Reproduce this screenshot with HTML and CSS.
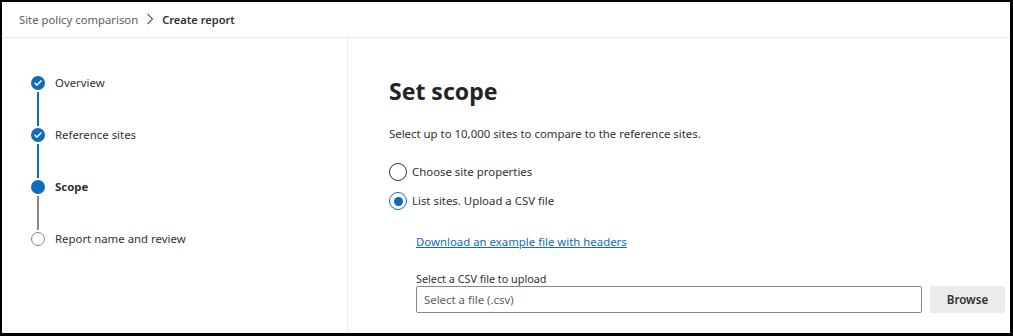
FILE: index.html
```html
<!DOCTYPE html>
<html>
<head>
  <meta charset="UTF-8">
  <title>Create report – Site policy comparison</title>
  <meta name="viewport" content="width=device-width, initial-scale=1.0">
  <link rel="stylesheet" href="styles.css">
</head>
<body>
  <div class="frame">
    <header class="topbar">
      <span class="crumb">Site policy comparison</span>
      <svg class="chev" width="8" height="12" viewBox="0 0 8 12"><path d="M1.5 1 L6.5 6 L1.5 11" fill="none" stroke="#605e5c" stroke-width="1.1"/></svg>
      <span class="crumb current">Create report</span>
    </header>

    <div class="main">
      <nav class="steps">
        <ol>
          <li class="step done">
            <div class="rail">
              <span class="dot"><svg width="14" height="14" viewBox="0 0 14 14"><path d="M4 7.2 L6 9.1 L10 4.9" fill="none" stroke="#fff" stroke-width="1.5" stroke-linecap="round" stroke-linejoin="round"/></svg></span>
              <span class="line"></span>
            </div>
            <span class="label">Overview</span>
          </li>
          <li class="step done">
            <div class="rail">
              <span class="dot"><svg width="14" height="14" viewBox="0 0 14 14"><path d="M4 7.2 L6 9.1 L10 4.9" fill="none" stroke="#fff" stroke-width="1.5" stroke-linecap="round" stroke-linejoin="round"/></svg></span>
              <span class="line"></span>
            </div>
            <span class="label">Reference sites</span>
          </li>
          <li class="step active">
            <div class="rail">
              <span class="dot"></span>
              <span class="line"></span>
            </div>
            <span class="label">Scope</span>
          </li>
          <li class="step todo">
            <div class="rail">
              <span class="dot"></span>
            </div>
            <span class="label">Report name and review</span>
          </li>
        </ol>
      </nav>

      <section class="content">
        <h1>Set scope</h1>
        <p class="intro">Select up to 10,000 sites to compare to the reference sites.</p>

        <div class="choices">
          <label class="choice">
            <span class="radio"></span>
            <span>Choose site properties</span>
          </label>
          <label class="choice">
            <span class="radio checked"></span>
            <span>List sites. Upload a CSV file</span>
          </label>
        </div>

        <div class="upload">
          <a href="#" class="dl-link">Download an example file with headers</a>
          <div class="field-label">Select a CSV file to upload</div>
          <div class="file-row">
            <div class="file-input">Select a file (.csv)</div>
            <button class="browse">Browse</button>
          </div>
        </div>
      </section>
    </div>
  </div>
</body>
</html>
```

FILE: styles.css
```css
* {
  box-sizing: border-box;
}
body {
  margin: 0;
  background: #fff;
  color: #323130;
  font-family: 'Noto Sans', 'Open Sans', sans-serif;
  font-size: 11.4px;
}
.frame {
  width: 1013px;
  height: 336px;
  border-style: solid;
  border-color: #000;
  border-width: 2px 3px 3px 2px;
  overflow: hidden;
  display: flex;
  flex-direction: column;
}
.topbar {
  height: 36px;
  flex: none;
  display: flex;
  align-items: center;
  gap: 8px;
  padding: 0 0 1px 17px;
  border-bottom: 1px solid #edebe9;
}
.crumb {
  color: #605e5c;
  font-size: 11.3px;
}
.crumb.current {
  color: #323130;
  font-weight: 600;
  font-size: 11.1px;
}
.chev {
  display: block;
}
.main {
  flex: 1;
  display: flex;
  min-height: 0;
}
.steps {
  width: 346px;
  flex: none;
  border-right: 1px solid #edebe9;
  padding: 38px 0 0 29px;
}
.steps ol {
  list-style: none;
  margin: 0;
  padding: 0;
}
.step {
  display: flex;
  align-items: flex-start;
  gap: 10px;
}
.rail {
  width: 14px;
  display: flex;
  flex-direction: column;
  align-items: center;
}
.dot {
  width: 14px;
  height: 14px;
  border-radius: 50%;
  display: block;
}
.dot svg {
  display: block;
}
.line {
  width: 2px;
  height: 34px;
  margin: 2px 0;
  background: #0f6cbd;
}
.step.done .dot, .step.active .dot {
  background: #0f6cbd;
}
.step.active .line {
  background: #8a8886;
}
.step.todo .dot {
  border: 1.5px solid #8a8886;
  background: #fff;
}
.label {
  line-height: 14px;
  color: #323130;
}
.step.active .label {
  font-weight: 700;
}
.content {
  flex: 1;
  padding: 37px 5px 0 41px;
}
h1 {
  margin: 0;
  font-size: 23px;
  font-weight: 700;
  line-height: 32px;
  color: #242424;
}
.intro {
  margin: 18px 0 0;
  line-height: 18px;
}
.choices {
  margin-top: 20px;
  display: flex;
  flex-direction: column;
  gap: 11px;
}
.choice {
  display: flex;
  align-items: center;
  gap: 5px;
  line-height: 18px;
}
.radio {
  width: 18px;
  height: 18px;
  border-radius: 50%;
  border: 1px solid #323130;
  display: flex;
  align-items: center;
  justify-content: center;
}
.radio.checked {
  border: 1.5px solid #0f6cbd;
}
.radio.checked::after {
  content: "";
  width: 9px;
  height: 9px;
  border-radius: 50%;
  background: #0f6cbd;
}
.upload {
  padding-left: 27px;
  margin-top: 23px;
}
.dl-link {
  color: #0f6cbd;
  text-decoration: underline;
  line-height: 18px;
}
.field-label {
  margin-top: 21px;
  font-size: 10.8px;
  line-height: 14px;
}
.file-row {
  display: flex;
  gap: 8px;
  margin-top: 0;
}
.file-input {
  flex: 1;
  height: 27px;
  border: 1px solid #8a8886;
  border-radius: 2px;
  padding: 0 7px;
  display: flex;
  align-items: center;
  color: #605e5c;
}
.browse {
  width: 75px;
  height: 27px;
  border: none;
  border-radius: 2px;
  background: #ebebeb;
  color: #323130;
  font-family: inherit;
  font-size: 11.6px;
  font-weight: 600;
}
```
